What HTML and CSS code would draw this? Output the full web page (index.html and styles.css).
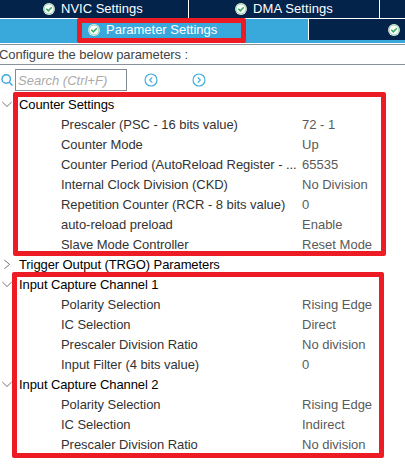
FILE: index.html
```html
<!DOCTYPE html>
<html lang="en">
<head>
<meta charset="utf-8">
<title>Parameter Settings</title>
<link rel="stylesheet" href="styles.css">
</head>
<body>
<svg class="defs" width="0" height="0">
  <symbol id="ok" viewBox="0 0 12 12"><circle cx="6" cy="6" r="5.9" fill="#fff"/><circle cx="6" cy="6" r="5" fill="#fff" stroke="#6cc58a" stroke-width="0.8"/><path d="M3.3 5.8 5.3 7.8 8.8 4.2" fill="none" stroke="#39ad61" stroke-width="1.6"/></symbol>
  <symbol id="down" viewBox="0 0 12 12"><path d="M1.3 4 6 8.5l4.7-4.5" fill="none" stroke="#777" stroke-width="1"/></symbol>
  <symbol id="right" viewBox="0 0 12 12"><path d="M3.3 2 8.6 6.4l-5.3 4.4" fill="none" stroke="#777" stroke-width="1"/></symbol>
</svg>
<div class="panel">
  <nav class="tabs upper">
    <div class="tab nvic"><svg class="ok"><use href="#ok"/></svg><span>NVIC Settings</span></div>
    <div class="tab dma"><svg class="ok"><use href="#ok"/></svg><span>DMA Settings</span></div>
    <div class="tab rest"></div>
  </nav>
  <nav class="tabs lower">
    <div class="tab active"><svg class="ok"><use href="#ok"/></svg><span>Parameter Settings</span></div>
    <div class="tab next"><svg class="ok"><use href="#ok"/></svg></div>
  </nav>
  <div class="strip"></div>
  <div class="hint"><span>Configure the below parameters :</span></div>
  <div class="tools">
    <svg class="lens" viewBox="0 0 12 12"><circle cx="5.2" cy="5" r="4.2"/><path d="m8.2 8.2 3.3 3.3"/></svg>
    <div class="search"><span>Search (Ctrl+F)</span></div>
    <svg class="nav prev" viewBox="0 0 14 14"><circle cx="7" cy="7" r="6"/><path d="M8.3 4.4 5.7 7l2.6 2.6"/></svg>
    <svg class="nav" viewBox="0 0 14 14"><circle cx="7" cy="7" r="6"/><path d="M5.7 4.4 8.3 7 5.7 9.6"/></svg>
  </div>
  <div class="tree">
    <div class="group"><svg><use href="#down"/></svg><span>Counter Settings</span></div>
    <div class="row"><span>Prescaler (PSC - 16 bits value)</span><span>72 - 1</span></div>
    <div class="row"><span>Counter Mode</span><span>Up</span></div>
    <div class="row"><span>Counter Period (AutoReload Register - ...</span><span>65535</span></div>
    <div class="row"><span>Internal Clock Division (CKD)</span><span>No Division</span></div>
    <div class="row"><span>Repetition Counter (RCR - 8 bits value)</span><span>0</span></div>
    <div class="row"><span>auto-reload preload</span><span>Enable</span></div>
    <div class="row"><span>Slave Mode Controller</span><span>Reset Mode</span></div>
    <div class="group"><svg><use href="#right"/></svg><span>Trigger Output (TRGO) Parameters</span></div>
    <div class="group"><svg><use href="#down"/></svg><span>Input Capture Channel 1</span></div>
    <div class="row"><span>Polarity Selection</span><span>Rising Edge</span></div>
    <div class="row"><span>IC Selection</span><span>Direct</span></div>
    <div class="row"><span>Prescaler Division Ratio</span><span>No division</span></div>
    <div class="row"><span>Input Filter (4 bits value)</span><span>0</span></div>
    <div class="group"><svg><use href="#down"/></svg><span>Input Capture Channel 2</span></div>
    <div class="row"><span>Polarity Selection</span><span>Rising Edge</span></div>
    <div class="row"><span>IC Selection</span><span>Indirect</span></div>
    <div class="row"><span>Prescaler Division Ratio</span><span>No division</span></div>
  </div>
  <div class="mark mark-tab"></div>
  <div class="mark mark-counter"></div>
  <div class="mark mark-capture"></div>
</div>
</body>
</html>
```

FILE: styles.css
```css
* { box-sizing: border-box; }
body { margin: 0; background: #fff; font: 13px/20px "Liberation Sans", Arial, sans-serif; }
svg { display: block; flex: none; }
.defs { position: absolute; }
.panel { position: relative; width: 405px; height: 464px; overflow: hidden; }
.tabs { display: flex; color: #fff; background: #fff; }
.tab { display: flex; align-items: center; gap: 6px; background: #03234b; white-space: nowrap; }
.upper { height: 19px; gap: 1px; padding-bottom: 1px; }
.nvic { width: 188px; padding-left: 43px; }
.dma { width: 190px; padding-left: 46px; letter-spacing: 0.1px; }
.rest { flex: 1; }
.lower { height: 21px; gap: 1px; }
.active { width: 308px; padding-left: 88px; background: #39a9dc; }
.next { flex: 1; padding-left: 79px; }
.ok { width: 12px; height: 12px; }
.strip { height: 3px; background: #39a9dc; }
.hint { height: 21px; margin-top: 1px; border: solid #8c9299; border-width: 1px 0; color: #444; line-height: 19px; letter-spacing: -0.1px; }
.hint span { margin-left: -1px; }
.tools { display: flex; align-items: center; height: 29px; padding: 1px 0 0 1px; }
.lens { width: 12px; height: 12px; margin-right: 2px; fill: none; stroke: #39a9dc; stroke-width: 1.4; }
.search { width: 112px; height: 22px; border: 1px solid #858b94; color: #aaa; font-style: italic; line-height: 21px; padding-left: 2px; white-space: nowrap; }
.nav { width: 14px; height: 14px; fill: none; stroke: #39a9dc; stroke-width: 1.1; }
.prev { margin: 0 34px 0 17px; }
.tree { display: grid; grid-auto-rows: 20px; line-height: 22px; }
.group { display: flex; gap: 6px; padding-left: 1px; color: #000; letter-spacing: -0.1px; }
.group svg { width: 12px; height: 12px; margin-top: 4px; }
.row { display: grid; grid-template-columns: 241px 1fr; padding-left: 61px; color: #333; white-space: nowrap; }
.row span:first-child { letter-spacing: -0.05px; }
.row span:last-child { color: #5a5a5a; }
.mark { position: absolute; border: 5px solid #ed1c24; border-radius: 2px; }
.mark-tab { left: 77px; top: 18px; width: 169px; height: 25px; }
.mark-counter { left: 13px; top: 92px; width: 373px; height: 164px; }
.mark-capture { left: 12px; top: 272px; width: 372px; height: 186px; }
```
